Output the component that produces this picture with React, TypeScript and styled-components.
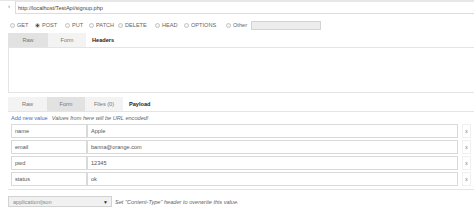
import React from "react";
import styled, { createGlobalStyle } from "styled-components";

const Global = createGlobalStyle`
  html, body { margin: 0; padding: 0; background: #fff; }
  body { font-family: "Liberation Sans", Arial, sans-serif; font-size: 5.6px; color: #444; }
`;

const Page = styled.div`
  width: 474px;
  height: 213px;
  overflow: hidden;
  background: #fff;
  border-top: 1px solid #e6e6e6;
  box-sizing: border-box;
`;

const UrlBar = styled.div`
  display: flex;
  align-items: flex-start;
  height: 14px;
  padding-left: 8px;
`;

const Arrow = styled.span`
  width: 7px;
  font-size: 6px;
  color: #777;
  line-height: 11px;
`;

const UrlInput = styled.div`
  flex: 1;
  height: 13px;
  box-sizing: border-box;
  border: 1px solid #dcdcdc;
  border-top-color: #e8e8e8;
  border-right: none;
  padding-left: 2px;
  display: flex;
  align-items: center;
  color: #444;
`;

const MethodRow = styled.div`
  display: flex;
  align-items: center;
  height: 12px;
  margin-top: 4px;
  padding-left: 10px;
`;

const Method = styled.label<{ w: number }>`
  width: ${(p) => p.w}px;
  display: flex;
  align-items: center;
  gap: 2px;
  color: #666;
  white-space: nowrap;
`;

const Radio = styled.span<{ on?: boolean }>`
  width: 5px;
  height: 5px;
  border-radius: 50%;
  box-sizing: border-box;
  border: 1px solid #c4c4c4;
  background: ${(p) => (p.on ? "radial-gradient(circle, #555 0 1.2px, #fff 1.6px)" : "#f6f6f6")};
  flex: none;
`;

const OtherInput = styled.div`
  width: 70px;
  height: 9px;
  box-sizing: border-box;
  background: #ececec;
  border: 1px solid #d4d4d4;
`;

const TabBar = styled.div<{ top: number }>`
  display: flex;
  align-items: stretch;
  height: 14px;
  margin-top: ${(p) => p.top}px;
  margin-left: 8px;
  border-bottom: 1px solid #e4e4e4;
`;

const Tab = styled.div<{ w: number; active?: boolean }>`
  width: ${(p) => p.w}px;
  display: flex;
  align-items: center;
  justify-content: center;
  background: ${(p) => (p.active ? "#e2e2e2" : "#f3f3f3")};
  color: #777;
`;

const TabTitle = styled.div`
  display: flex;
  align-items: center;
  padding-left: 6px;
  font-weight: bold;
  color: #222;
`;

const HeadersBox = styled.div`
  height: 44px;
  margin-left: 8px;
  border-left: 1px solid #e4e4e4;
  border-bottom: 1px solid #e4e4e4;
`;

const AddLine = styled.div`
  display: flex;
  align-items: center;
  height: 11px;
  padding-left: 11px;
  gap: 4px;
`;

const AddLink = styled.span`
  color: #3a6fc4;
`;

const Hint = styled.span`
  font-style: italic;
  color: #666;
`;

const Rows = styled.div`
  display: flex;
  flex-direction: column;
  gap: 2px;
  padding-left: 11px;
  padding-bottom: 2px;
  margin-top: 1px;
`;

const Row = styled.div`
  display: flex;
  align-items: stretch;
  height: 14px;
`;

const Field = styled.div<{ w?: number }>`
  ${(p) => (p.w ? `width: ${p.w}px;` : "flex: none; width: 371px;")}
  box-sizing: border-box;
  border: 1px solid #dadada;
  display: flex;
  align-items: center;
  padding-left: 3px;
  color: #555;
`;

const RemoveBtn = styled.div`
  width: 9px;
  margin-left: 4px;
  box-sizing: border-box;
  border: 1px solid #f0f0f0;
  display: flex;
  align-items: center;
  justify-content: center;
  color: #777;
  font-size: 5px;
`;

const Divider = styled.div`
  height: 0;
  margin-left: 8px;
  margin-top: 1px;
  border-top: 1px solid #e4e4e4;
`;

const Footer = styled.div`
  display: flex;
  align-items: center;
  margin-top: 6px;
  padding-left: 8px;
  gap: 3px;
`;

const Select = styled.div`
  width: 104px;
  height: 11px;
  box-sizing: border-box;
  border: 1px solid #d2d2d2;
  background: #f1f1f1;
  display: flex;
  align-items: center;
  justify-content: space-between;
  padding: 0 3px 0 4px;
  color: #888;
`;

const Caret = styled.span`
  font-size: 5px;
  color: #333;
`;

const methods: [string, number, boolean?][] = [
  ["GET", 25],
  ["POST", 30, true],
  ["PUT", 24],
  ["PATCH", 29],
  ["DELETE", 37],
  ["HEAD", 29],
  ["OPTIONS", 42],
  ["Other", 25],
];

const rows = [
  ["name", "Apple"],
  ["email", "banna@orange.com"],
  ["pwd", "12345"],
  ["status", "ok"],
];

export default function App() {
  return (
    <Page>
      <Global />
      <UrlBar>
        <Arrow>›</Arrow>
        <UrlInput>http://localhost/TestApi/signup.php</UrlInput>
      </UrlBar>
      <MethodRow>
        {methods.map(([m, w, on]) => (
          <Method key={m} w={w}>
            <Radio on={on} />
            {m}
          </Method>
        ))}
        <OtherInput />
      </MethodRow>
      <TabBar top={2}>
        <Tab w={40} active>Raw</Tab>
        <Tab w={38}>Form</Tab>
        <TabTitle>Headers</TabTitle>
      </TabBar>
      <HeadersBox />
      <TabBar top={4}>
        <Tab w={39}>Raw</Tab>
        <Tab w={38} active>Form</Tab>
        <Tab w={38}>Files (0)</Tab>
        <TabTitle>Payload</TabTitle>
      </TabBar>
      <AddLine>
        <AddLink>Add new value</AddLink>
        <Hint>Values from here will be URL encoded!</Hint>
      </AddLine>
      <Rows>
        {rows.map(([k, v]) => (
          <Row key={k}>
            <Field w={76}>{k}</Field>
            <Field>{v}</Field>
            <RemoveBtn>x</RemoveBtn>
          </Row>
        ))}
      </Rows>
      <Divider />
      <Footer>
        <Select>
          <span>application/json</span>
          <Caret>▼</Caret>
        </Select>
        <Hint>Set "Content-Type" header to overwrite this value.</Hint>
      </Footer>
    </Page>
  );
}
